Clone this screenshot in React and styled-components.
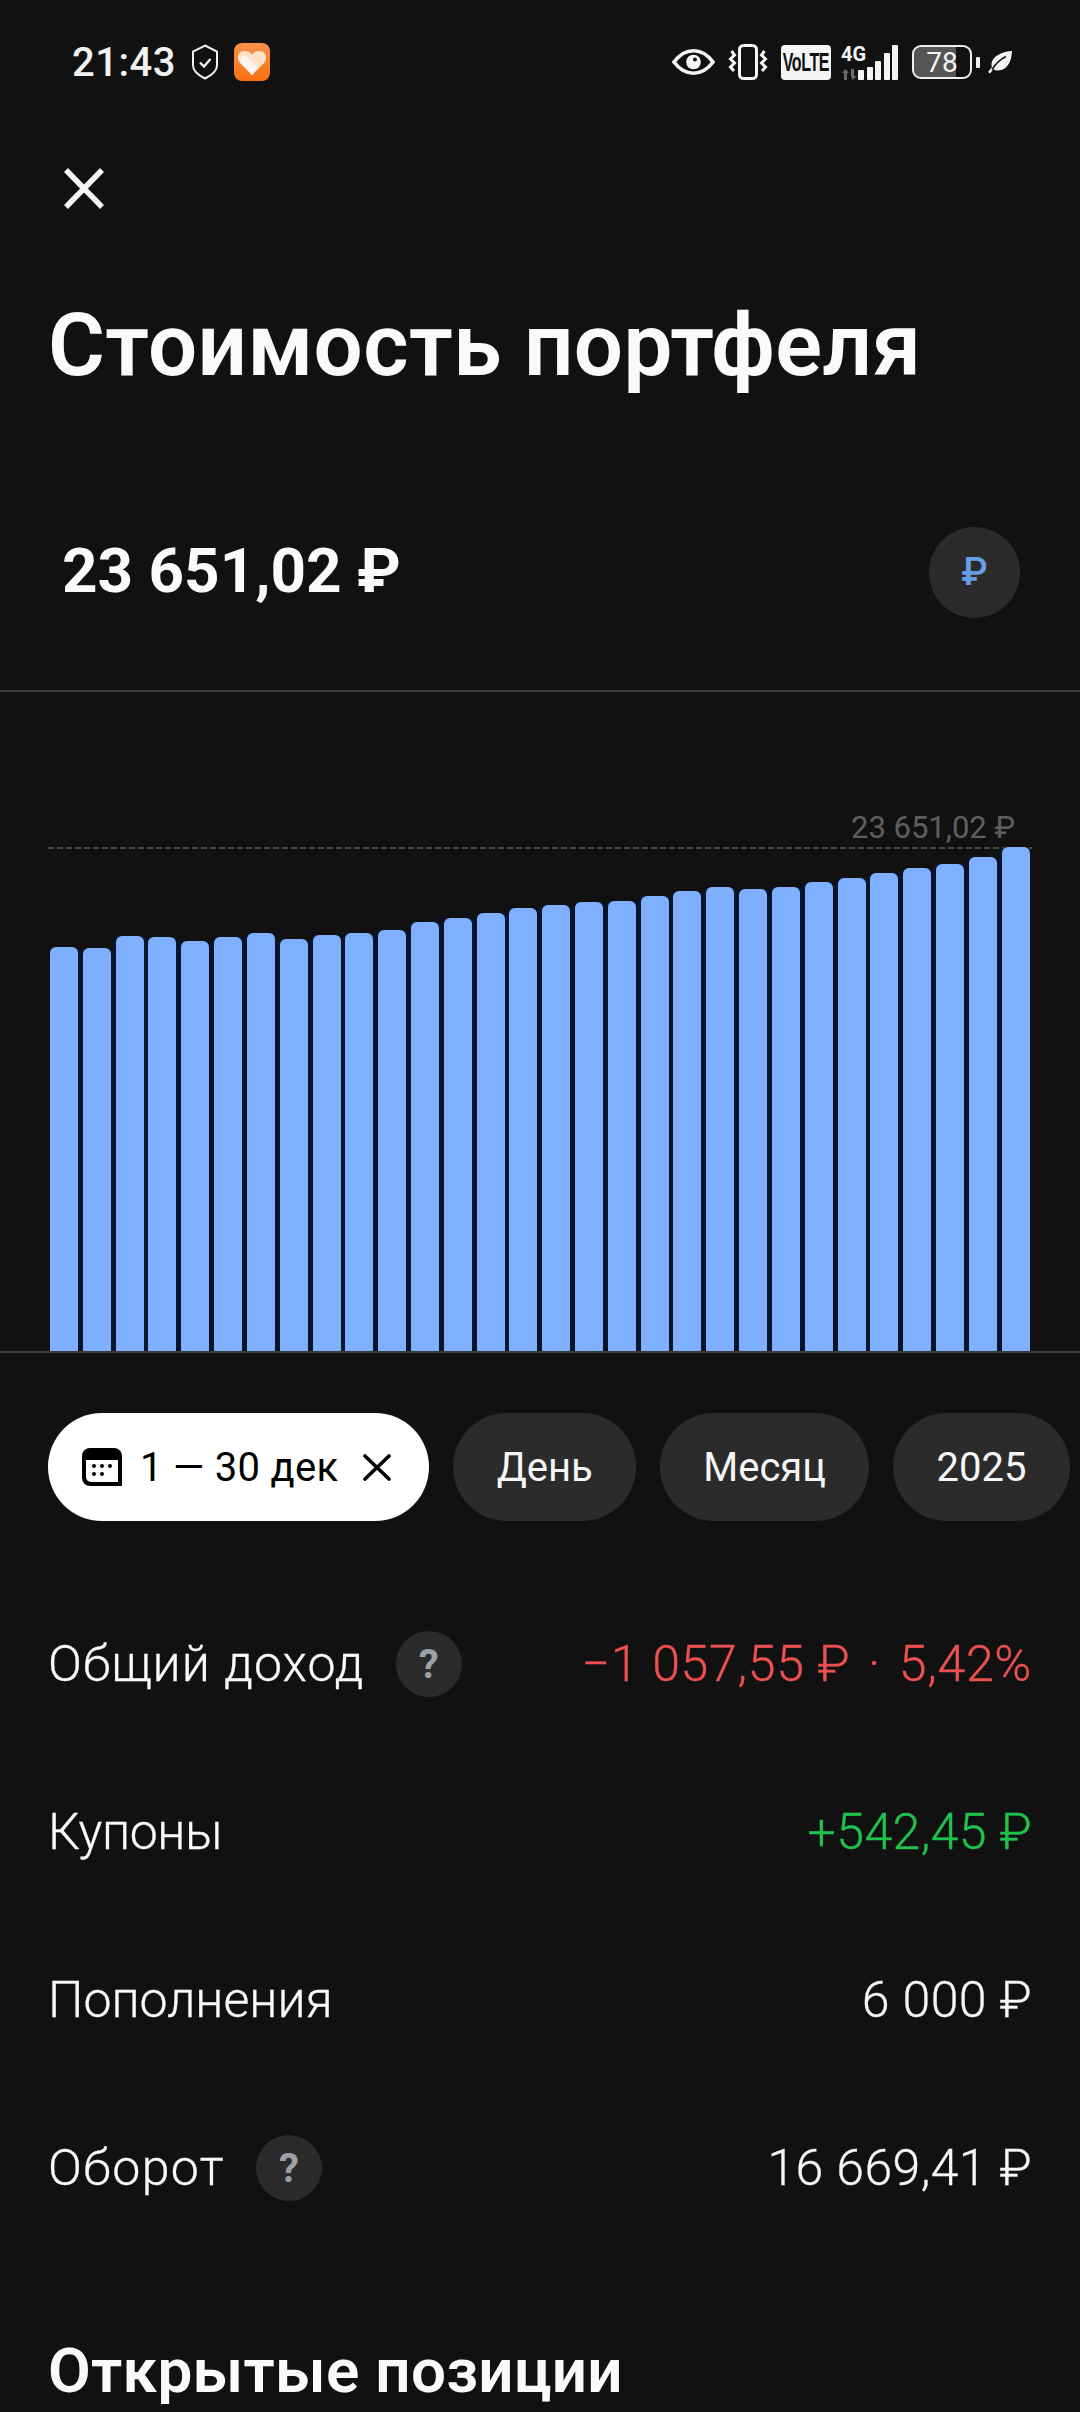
import React from 'react'
import styled, { createGlobalStyle } from 'styled-components'

const GlobalStyle = createGlobalStyle`
    html, body {
        margin: 0;
        padding: 0;
        background: #111112;
    }
    * {
        box-sizing: border-box;
    }
`

const barTops = [
    947, 948, 936, 937, 941, 937, 933, 939, 935, 933,
    930, 922, 918, 913, 908, 905, 902, 901, 896, 891,
    887, 889, 887, 882, 878, 873, 868, 864, 857, 847,
]
const chartBase = 1351

const rows = [
    { label: 'Общий доход', help: true, spacing: 1.1, value: '−1 057,55 ₽\u2004·\u20045,42%', tone: 'loss' },
    { label: 'Купоны', spacing: -0.4, value: '+542,45 ₽', tone: 'gain' },
    { label: 'Пополнения', spacing: 0, value: '6 000 ₽' },
    { label: 'Оборот', help: true, spacing: 1.4, value: '16 669,41 ₽' },
]

const toneColors = {
    loss: '#ec5150',
    gain: '#1fc24c',
}

const App = () => {
    return (
        <Page>
            <GlobalStyle />
            <StatusBar>
                <StatusGroup>
                    <Clock>21:43</Clock>
                    <svg width="26" height="36" viewBox="0 0 26 36" fill="none" stroke="#f2f2f2" strokeWidth="2">
                        <path d="M13 1.500 25 7.500v14c0 5-5 9.500-12 13C6 31 1 26.500 1 21.500v-14z" />
                        <path d="M8 18.500l4 4 6.500-7.500" strokeWidth="2.400" />
                    </svg>
                    <svg width="36" height="38" viewBox="0 0 36 38">
                        <defs>
                            <linearGradient id="tile" x1="0" y1="0" x2="0" y2="1">
                                <stop offset="0" stopColor="#f6924a" />
                                <stop offset="1" stopColor="#f7700f" />
                            </linearGradient>
                        </defs>
                        <rect width="36" height="38" rx="8" fill="url(#tile)" />
                        <path d="M18 32 5.500 19.500C2 15 4.500 8 10.500 8c3.500 0 6 1.500 7.500 4 1.500-2.500 4-4 7.500-4 6 0 8.500 7 5 11.500z" fill="#ffe3c9" />
                        <path d="M18 32 7 20c-3-4 2-9 6-6l11 11z" fill="#fff7ef" />
                    </svg>
                </StatusGroup>
                <StatusIcons>
                    <svg width="43" height="28" viewBox="0 0 44 28" fill="none">
                        <path d="M2 14C8 6 15 2.500 22 2.500S36 6 42 14c-6 8-13 11.500-20 11.500S8 22 2 14z" stroke="#f4f4f4" strokeWidth="3.800" />
                        <circle cx="22" cy="14" r="7.500" fill="#f4f4f4" />
                        <circle cx="23.500" cy="11.500" r="2" fill="#111112" />
                    </svg>
                    <svg width="40" height="36" viewBox="0 0 40 36" fill="none" stroke="#f4f4f4" strokeWidth="3">
                        <rect x="11.500" y="1.500" width="17" height="33" rx="4" />
                        <path d="M3.500 7 6.500 11 2.500 15 6.500 19 2.500 23 6 27" />
                        <path d="M36.500 7 33.500 11 37.500 15 33.500 19 37.500 23 34 27" />
                    </svg>
                    <VolteBadge>
                        <VolteText>VoLTE</VolteText>
                    </VolteBadge>
                    <NetworkBlock>
                        <NetworkStack>
                            <NetworkLabel>4G</NetworkLabel>
                            <svg width="17" height="11" viewBox="0 0 17 11" fill="#6a6a6a">
                                <path d="M4.500 0 8 4H6v7H3V4H1z" />
                                <path d="M10 0h3v7h3l-4.500 4L10 7z" />
                            </svg>
                        </NetworkStack>
                        <SignalBars>
                            {[10, 13, 19, 27, 35].map((h) => (
                                <SignalBar key={h} style={{ height: h }} />
                            ))}
                        </SignalBars>
                    </NetworkBlock>
                    <BatteryBlock>
                        <Battery>78</Battery>
                        <BatteryCap />
                    </BatteryBlock>
                    <svg width="24" height="23" viewBox="0 0 24 23">
                        <path d="M24 0C23.500 10 20 19 10 19.500c-2 0-3.500-.500-4.500-1.500L2 22.500 0 21l4-5C2 10 7 1.500 24 0z" fill="#f4f4f4" />
                        <path d="M4 18.500C8 12 12 8.500 18 5.500" fill="none" stroke="#111112" strokeWidth="1.500" />
                    </svg>
                </StatusIcons>
            </StatusBar>

            <CloseRow>
                <svg width="40" height="41" viewBox="0 0 40 41" stroke="#f6f6f6" strokeWidth="5.500">
                    <path d="M2 2 38 39M38 2 2 39" />
                </svg>
            </CloseRow>

            <Title>Стоимость портфеля</Title>

            <BalanceRow>
                <Balance>23 651,02 ₽</Balance>
                <CurrencyButton>₽</CurrencyButton>
            </BalanceRow>

            <Chart>
                <PeakLine />
                <PeakLabel>23 651,02 ₽</PeakLabel>
                {barTops.map((top, i) => (
                    <Bar key={i} style={{ height: chartBase - top }} />
                ))}
            </Chart>

            <Chips>
                <ActiveChip>
                    <svg width="40" height="38" viewBox="0 0 40 38">
                        <path d="M8 0h24a8 8 0 0 1 8 8v30H8a8 8 0 0 1-8-8V8a8 8 0 0 1 8-8z" fill="#000" />
                        <path d="M4 12h32v22H9a5 5 0 0 1-5-5z" fill="#fff" />
                        <circle cx="12" cy="18" r="2" />
                        <circle cx="20" cy="18" r="2" />
                        <circle cx="28" cy="18" r="2" />
                        <circle cx="12" cy="26" r="2" />
                        <circle cx="20" cy="26" r="2" />
                    </svg>
                    <ChipDates>1 — 30 дек</ChipDates>
                    <svg width="28" height="27" viewBox="0 0 28 27" stroke="#000" strokeWidth="3.600" strokeLinecap="round">
                        <path d="M2 2 26 25M26 2 2 25" />
                    </svg>
                </ActiveChip>
                <Chip>День</Chip>
                <Chip>Месяц</Chip>
                <Chip>2025</Chip>
            </Chips>

            <Rows>
                {rows.map((row) => (
                    <Row key={row.label}>
                        <RowLabel $spacing={row.spacing}>
                            {row.label}
                            {row.help && <HelpBadge>?</HelpBadge>}
                        </RowLabel>
                        <RowValue $tone={row.tone}>{row.value}</RowValue>
                    </Row>
                ))}
            </Rows>

            <SectionTitle>Открытые позиции</SectionTitle>
        </Page>
    )
}

const Page = styled.div`
    width: 1080px;
    height: 2412px;
    overflow: hidden;
    background: #111112;
    color: #fafafa;
    font-family: Roboto, "Noto Sans", sans-serif;
`

const StatusBar = styled.div`
    display: flex;
    align-items: center;
    justify-content: space-between;
    height: 124px;
    padding: 0 68px 0 72px;
`

const StatusGroup = styled.div`
    display: flex;
    align-items: center;
    gap: 16px;
`

const Clock = styled.span`
    font-size: 40px;
    font-weight: 500;
    letter-spacing: 0.5px;
    color: #f2f2f2;
`

const StatusIcons = styled.div`
    display: flex;
    align-items: center;
    gap: 13px;
`

const VolteBadge = styled.span`
    display: flex;
    align-items: center;
    justify-content: center;
    width: 50px;
    height: 35px;
    margin-right: -3px;
    border-radius: 4px;
    background: #f4f4f4;
`

const VolteText = styled.span`
    color: #111;
    font-family: "Liberation Sans", sans-serif;
    font-size: 20px;
    font-weight: 700;
    letter-spacing: -0.5px;
    transform: scale(0.8, 1.25);
`

const NetworkBlock = styled.div`
    display: flex;
    align-items: flex-end;
    height: 35px;
`

const NetworkStack = styled.div`
    display: flex;
    flex-direction: column;
    align-items: flex-start;
    gap: 6px;
    width: 17px;
`

const NetworkLabel = styled.span`
    font-size: 20px;
    line-height: 18px;
    font-weight: 700;
    white-space: nowrap;
    color: #f4f4f4;
`

const SignalBars = styled.div`
    display: flex;
    align-items: flex-end;
    gap: 2.5px;
`

const SignalBar = styled.span`
    width: 6px;
    border-radius: 1px;
    background: #f4f4f4;
`

const BatteryBlock = styled.div`
    display: flex;
    align-items: center;
    gap: 4px;
    margin: 0 -5px 0 1px;
`

const Battery = styled.span`
    display: flex;
    align-items: center;
    justify-content: center;
    width: 60px;
    height: 34px;
    border: 2.5px solid #f0f0f0;
    border-radius: 9px;
    background: linear-gradient(90deg, #555 75%, transparent 75%);
    background-clip: padding-box;
    color: #f4f4f4;
    font-size: 28px;
`

const BatteryCap = styled.span`
    width: 4px;
    height: 11px;
    border-radius: 1px;
    background: #f0f0f0;
`

const CloseRow = styled.div`
    display: flex;
    align-items: center;
    height: 128px;
    padding-left: 64px;
`

const Title = styled.h1`
    display: flex;
    align-items: center;
    height: 186px;
    margin: 0;
    padding-left: 48px;
    font-size: 87px;
    font-weight: 600;
    letter-spacing: 0.4px;
    white-space: nowrap;
`

const BalanceRow = styled.div`
    display: flex;
    align-items: center;
    justify-content: space-between;
    height: 254px;
    padding: 16px 60px 2px 62px;
    border-bottom: 2px solid #3b3b3b;
`

const Balance = styled.div`
    margin-bottom: 2px;
    font-size: 62px;
    font-weight: 700;
`

const CurrencyButton = styled.div`
    display: flex;
    align-items: center;
    justify-content: center;
    width: 91px;
    height: 91px;
    margin-top: 2px;
    border-radius: 50%;
    background: #2b2b2b;
    color: #6a9de8;
    font-size: 38px;
    font-weight: 500;
`

const Chart = styled.div`
    position: relative;
    display: flex;
    align-items: flex-end;
    justify-content: space-between;
    height: 661px;
    padding: 0 50px;
    border-bottom: 2px solid #3b3b3b;
`

const PeakLine = styled.div`
    position: absolute;
    left: 48px;
    right: 48px;
    top: 155px;
    height: 2px;
    background: repeating-linear-gradient(90deg, #4a4a4a 0 6px, transparent 6px 9px);
`

const PeakLabel = styled.div`
    position: absolute;
    right: 65px;
    top: 117px;
    color: #5f5f5f;
    font-size: 31px;
    white-space: nowrap;
`

const Bar = styled.div`
    position: relative;
    width: 28px;
    border-radius: 6px 6px 0 0;
    background: #7fb0ff;
    box-shadow: 2.4px 0 0 #07162e, -2.4px 0 0 #07162e;

    &:nth-child(3) {
        box-shadow: 2.4px 0 0 #07162e;
    }

    &:last-child {
        box-shadow: -2.4px 0 0 #07162e;
    }
`

const Chips = styled.div`
    display: flex;
    gap: 24px;
    margin-top: 60px;
    padding-left: 48px;
`

const Chip = styled.div`
    display: flex;
    align-items: center;
    flex-shrink: 0;
    height: 108px;
    padding: 0 43.25px;
    border-radius: 54px;
    background: #2b2b2b;
    color: #f6f6f6;
    font-size: 40px;
`

const ActiveChip = styled(Chip)`
    gap: 18px;
    padding: 0 38px 0 34px;
    background: #fff;
    color: #000;
`

const ChipDates = styled.span`
    margin-right: 7px;
    letter-spacing: 0.3px;
`

const Rows = styled.div`
    display: flex;
    flex-direction: column;
    margin-top: 59px;
    padding: 0 48px;
`

const Row = styled.div`
    display: flex;
    align-items: center;
    justify-content: space-between;
    height: 168px;
    font-size: 50px;
    font-weight: 300;
    -webkit-text-stroke: 0.3px currentColor;
`

const RowLabel = styled.div`
    display: flex;
    align-items: center;
    gap: 31px;
    letter-spacing: ${(props) => props.$spacing}px;
`

const RowValue = styled.div`
    letter-spacing: ${(props) => (props.$tone === 'loss' ? 0.7 : 0.4)}px;
    color: ${(props) => toneColors[props.$tone] || '#f6f6f6'};
`

const HelpBadge = styled.span`
    display: flex;
    align-items: center;
    justify-content: center;
    width: 66px;
    height: 66px;
    border-radius: 50%;
    background: #2b2b2b;
    color: #a0a0a8;
    font-size: 40px;
    font-weight: 700;
    letter-spacing: 0;
    -webkit-text-stroke: 0;
`

const SectionTitle = styled.h2`
    display: flex;
    align-items: center;
    height: 80px;
    margin: 78px 0 0;
    padding-left: 48px;
    font-size: 62px;
    font-weight: 600;
    letter-spacing: 0.3px;
`

export default App
